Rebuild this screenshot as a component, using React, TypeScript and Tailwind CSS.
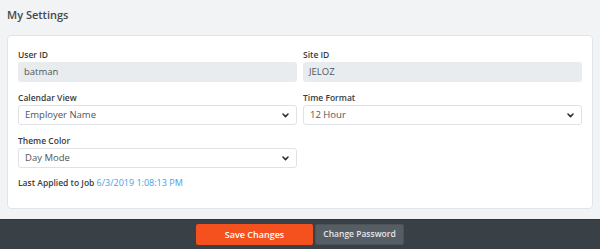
import React from "react";

const font = { fontFamily: '"Open Sans", "Noto Sans", sans-serif' };

function Chevron() {
  return (
    <svg width="7" height="5" viewBox="0 0 7 5" className="shrink-0">
      <polyline points="1,1 3.5,3.6 6,1" fill="none" stroke="#2f3337" strokeWidth="1.6" strokeLinecap="round" strokeLinejoin="round" />
    </svg>
  );
}

function Field({ label, children }: { label: string; children: React.ReactNode }) {
  return (
    <div className="flex flex-col mb-[8px]">
      <label className="text-[8.5px] leading-[15px] font-semibold text-[#383c40]">{label}</label>
      {children}
    </div>
  );
}

function ReadOnly({ value }: { value: string }) {
  return (
    <div className="h-[20px] rounded-[3px] bg-[#e9ecef] px-[6px] flex items-center text-[9.5px] text-[#50555a]">
      {value}
    </div>
  );
}

function Select({ value }: { value: string }) {
  return (
    <div className="h-[20px] rounded-[3px] border border-[#dfe3e6] bg-white pl-[6px] pr-[7px] flex items-center justify-between text-[9.5px] text-[#50555a]">
      <span>{value}</span>
      <Chevron />
    </div>
  );
}

export default function App() {
  return (
    <div className="h-[249px] w-[600px] bg-[#f1f3f4] flex flex-col" style={font}>
      <h1 className="px-[7px] pt-[7px] mb-[13px] text-[11px] leading-[15px] font-semibold text-[#43484d]">
        My Settings
      </h1>

      <div className="mx-[7px] rounded-[4px] border border-[#e2e5e8] bg-white px-[10px] pt-[11px] pb-[18px]">
        <div className="grid grid-cols-2 gap-x-[6px]">
          <Field label="User ID">
            <ReadOnly value="batman" />
          </Field>
          <Field label="Site ID">
            <ReadOnly value="JELOZ" />
          </Field>
          <Field label="Calendar View">
            <Select value="Employer Name" />
          </Field>
          <Field label="Time Format">
            <Select value="12 Hour" />
          </Field>
          <Field label="Theme Color">
            <Select value="Day Mode" />
          </Field>
        </div>
        <p className="text-[8.5px] leading-[14px] font-semibold text-[#383c40]">
          Last Applied to Job{" "}
          <span className="text-[9px] font-normal text-[#3ea2ea]">6/3/2019 1:08:13 PM</span>
        </p>
      </div>

      <footer className="mt-[10px] h-[30px] bg-[#394147] border-t border-[#30373c] flex items-start justify-center gap-[2px] pt-[4px]">
        <button className="h-[21px] w-[117px] rounded-[2px] bg-[#f4511e] text-white text-[9px] font-semibold">
          Save Changes
        </button>
        <button className="h-[21px] w-[89px] rounded-[2px] bg-[#565d63] border border-[#4c5359] text-[#e4e6e8] text-[8.5px] font-semibold">
          Change Password
        </button>
      </footer>
    </div>
  );
}
